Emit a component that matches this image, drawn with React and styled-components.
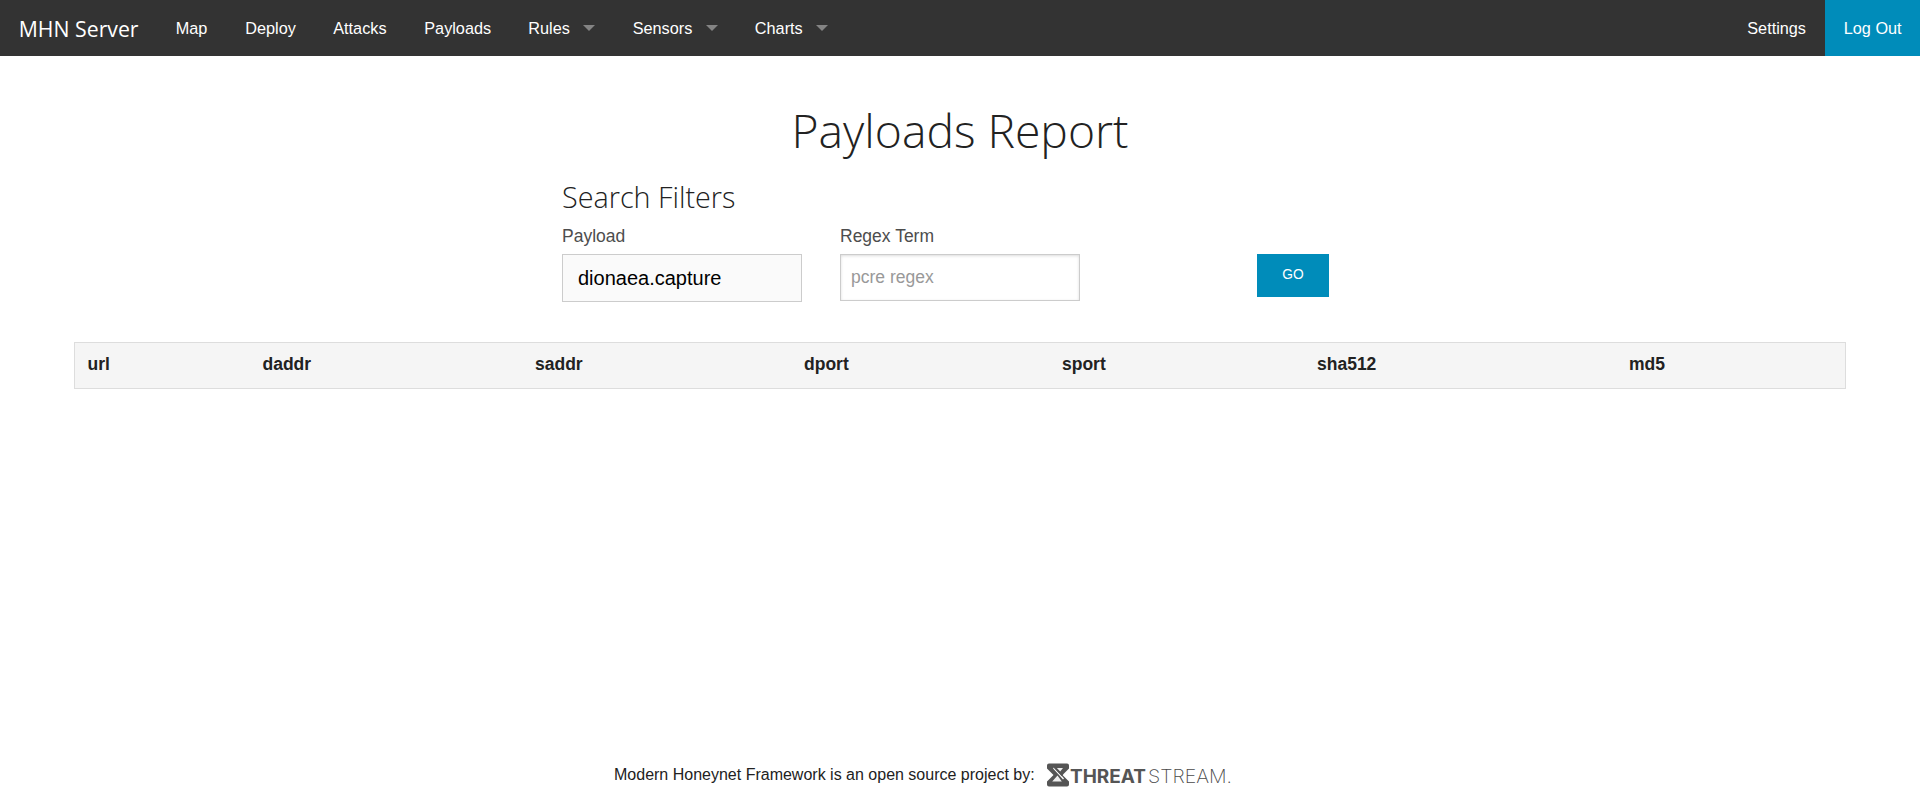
import React from "react";
import styled, { createGlobalStyle } from "styled-components";

const GlobalStyle = createGlobalStyle`
  *, *::before, *::after { box-sizing: border-box; }
  html, body { margin: 0; padding: 0; }
  body {
    background: #fff;
    color: #222;
    font-family: "Liberation Sans", Arial, sans-serif;
    font-size: 20px;
    overflow: hidden;
  }
`;

const Page = styled.div`
  display: flex;
  flex-direction: column;
  height: 790px;
`;

const TopBar = styled.nav`
  display: flex;
  flex: none;
  height: 56px;
  background: #333;
  color: #fff;
  line-height: 56px;
  font-size: 16.25px;
`;

const Brand = styled.a`
  width: 157px;
  padding-left: 18.75px;
  font-family: "Open Sans", sans-serif;
  font-size: 21.25px;
  line-height: 58px;
  white-space: nowrap;
`;

const NavItem = styled.a`
  display: flex;
  align-items: center;
  width: ${(p) => p.$width}px;
  padding-left: 18.75px;
  white-space: nowrap;
  background: ${(p) => (p.$active ? "#008cba" : "transparent")};
`;

const Caret = styled.span`
  margin-left: 13.25px;
  border: 6.25px solid transparent;
  border-top-color: rgba(255, 255, 255, 0.4);
  border-bottom-width: 0;
`;

const Spacer = styled.div`
  flex: 1;
`;

const Title = styled.h2`
  margin: 42px 0 0;
  text-align: center;
  font-family: "Open Sans", sans-serif;
  font-weight: 300;
  font-size: 46.25px;
  line-height: 65px;
`;

const Filters = styled.section`
  width: 796px;
  margin: 13px 0 0 562px;
`;

const FiltersHeading = styled.h4`
  margin: 0;
  font-family: "Open Sans", sans-serif;
  font-weight: 300;
  font-size: 28.75px;
  line-height: 42px;
`;

const FilterRow = styled.form`
  display: flex;
  align-items: flex-start;
  height: 84px;
`;

const Field = styled.label`
  display: flex;
  flex-direction: column;
  width: 240px;
  margin-right: 38px;
  color: #4d4d4d;
  font-size: 17.5px;
  line-height: 26px;
`;

const FieldLabel = styled.span`
  height: 36px;
  padding-top: 5px;
`;

const PayloadSelect = styled.select`
  appearance: none;
  height: 48px;
  padding: 0 15px;
  border: 1px solid #ccc;
  border-radius: 0;
  background: #fafafa;
  color: #000;
  font: 20px "Liberation Sans", Arial, sans-serif;
`;

const RegexInput = styled.input`
  height: 47px;
  padding: 0 10px;
  border: 1px solid #ccc;
  border-radius: 0;
  box-shadow: inset 0 1px 3px rgba(0, 0, 0, 0.14);
  font: 17.5px "Liberation Sans", Arial, sans-serif;
  &::placeholder { color: #999; opacity: 1; }
`;

const GoButton = styled.button`
  width: 72px;
  height: 43px;
  margin: 36px 0 0 139px;
  padding: 0 0 2px;
  border: 0;
  background: #008cba;
  color: #fff;
  font: 13.75px "Liberation Sans", Arial, sans-serif;
`;

const Report = styled.table`
  width: 1772px;
  height: 47px;
  margin: 40px 0 0 74px;
  border: 1px solid #ddd;
  border-spacing: 0;
  background: #f5f5f5;
  table-layout: fixed;
`;

const HeadCell = styled.th`
  width: ${(p) => p.$width}px;
  padding: 0 0 3px 12.5px;
  text-align: left;
  font-size: 17.5px;
  line-height: 22px;
`;

const Footer = styled.footer`
  display: flex;
  align-items: center;
  height: 30px;
  margin: auto 0 0 614px;
  font-size: 16px;
  white-space: nowrap;
`;

const FooterText = styled.span`
  width: 432px;
`;

const Logo = styled.svg`
  display: block;
  flex: none;
`;

const columns = [
  ["url", 175],
  ["daddr", 272.5],
  ["saddr", 269],
  ["dport", 258],
  ["sport", 255],
  ["sha512", 312],
  ["md5", 228.5],
];

const links = [
  { label: "Map", width: 69.5 },
  { label: "Deploy", width: 88 },
  { label: "Attacks", width: 91 },
  { label: "Payloads", width: 104 },
  { label: "Rules", width: 104.4, menu: true },
  { label: "Sensors", width: 122.2, menu: true },
  { label: "Charts", width: 110, menu: true },
];

function ThreatStreamLogo() {
  return (
    <Logo width="190" height="30" viewBox="0 0 190 30" role="img" aria-label="ThreatStream">
      <path
        fill="#555"
        d="M3 3.5H21Q23 3.5 23 5.5V8.5L16.5 15L23 21.5V24.5Q23 26.5 21 26.5H3Q1 26.5 1 24.5V21.5L7.5 15L1 8.5V5.5Q1 3.5 3 3.5Z"
      />
      <path fill="none" stroke="#fff" strokeWidth="1.3" d="M7.5 8L14 15L17.5 19" />
      <path fill="#fff" d="M11.5 15.5L15.8 21.5H6.2ZM9.8 8H17L14 11.8Z" fillOpacity=".9" />
      <path fill="none" stroke="#555" strokeWidth="2" d="M8.5 7L16.5 15.5" />
      <text x="24" y="23" fill="#555" fontFamily="Inter, sans-serif" fontWeight="700" fontSize="18.5" textLength="76" lengthAdjust="spacingAndGlyphs">THREAT</text>
      <text x="102" y="23" fill="#4a4a4a" fontFamily="Inter, sans-serif" fontWeight="200" fontSize="18.5" textLength="84" lengthAdjust="spacingAndGlyphs">STREAM.</text>
    </Logo>
  );
}

export default function App() {
  return (
    <Page>
      <GlobalStyle />
      <TopBar>
        <Brand>MHN Server</Brand>
        {links.map((l) => (
          <NavItem key={l.label} $width={l.width}>
            {l.label}
            {l.menu && <Caret />}
          </NavItem>
        ))}
        <Spacer />
        <NavItem $width={96.5}>Settings</NavItem>
        <NavItem $width={95} $active>Log Out</NavItem>
      </TopBar>
      <Title>Payloads Report</Title>
      <Filters>
        <FiltersHeading>Search Filters</FiltersHeading>
        <FilterRow>
          <Field>
            <FieldLabel>Payload</FieldLabel>
            <PayloadSelect>
              <option>dionaea.capture</option>
            </PayloadSelect>
          </Field>
          <Field>
            <FieldLabel>Regex Term</FieldLabel>
            <RegexInput type="text" placeholder="pcre regex" />
          </Field>
          <GoButton type="button">GO</GoButton>
        </FilterRow>
      </Filters>
      <Report>
        <thead>
          <tr>
            {columns.map(([name, width]) => (
              <HeadCell key={name} $width={width}>{name}</HeadCell>
            ))}
          </tr>
        </thead>
      </Report>
      <Footer>
        <FooterText>Modern Honeynet Framework is an open source project by:</FooterText>
        <ThreatStreamLogo />
      </Footer>
    </Page>
  );
}
